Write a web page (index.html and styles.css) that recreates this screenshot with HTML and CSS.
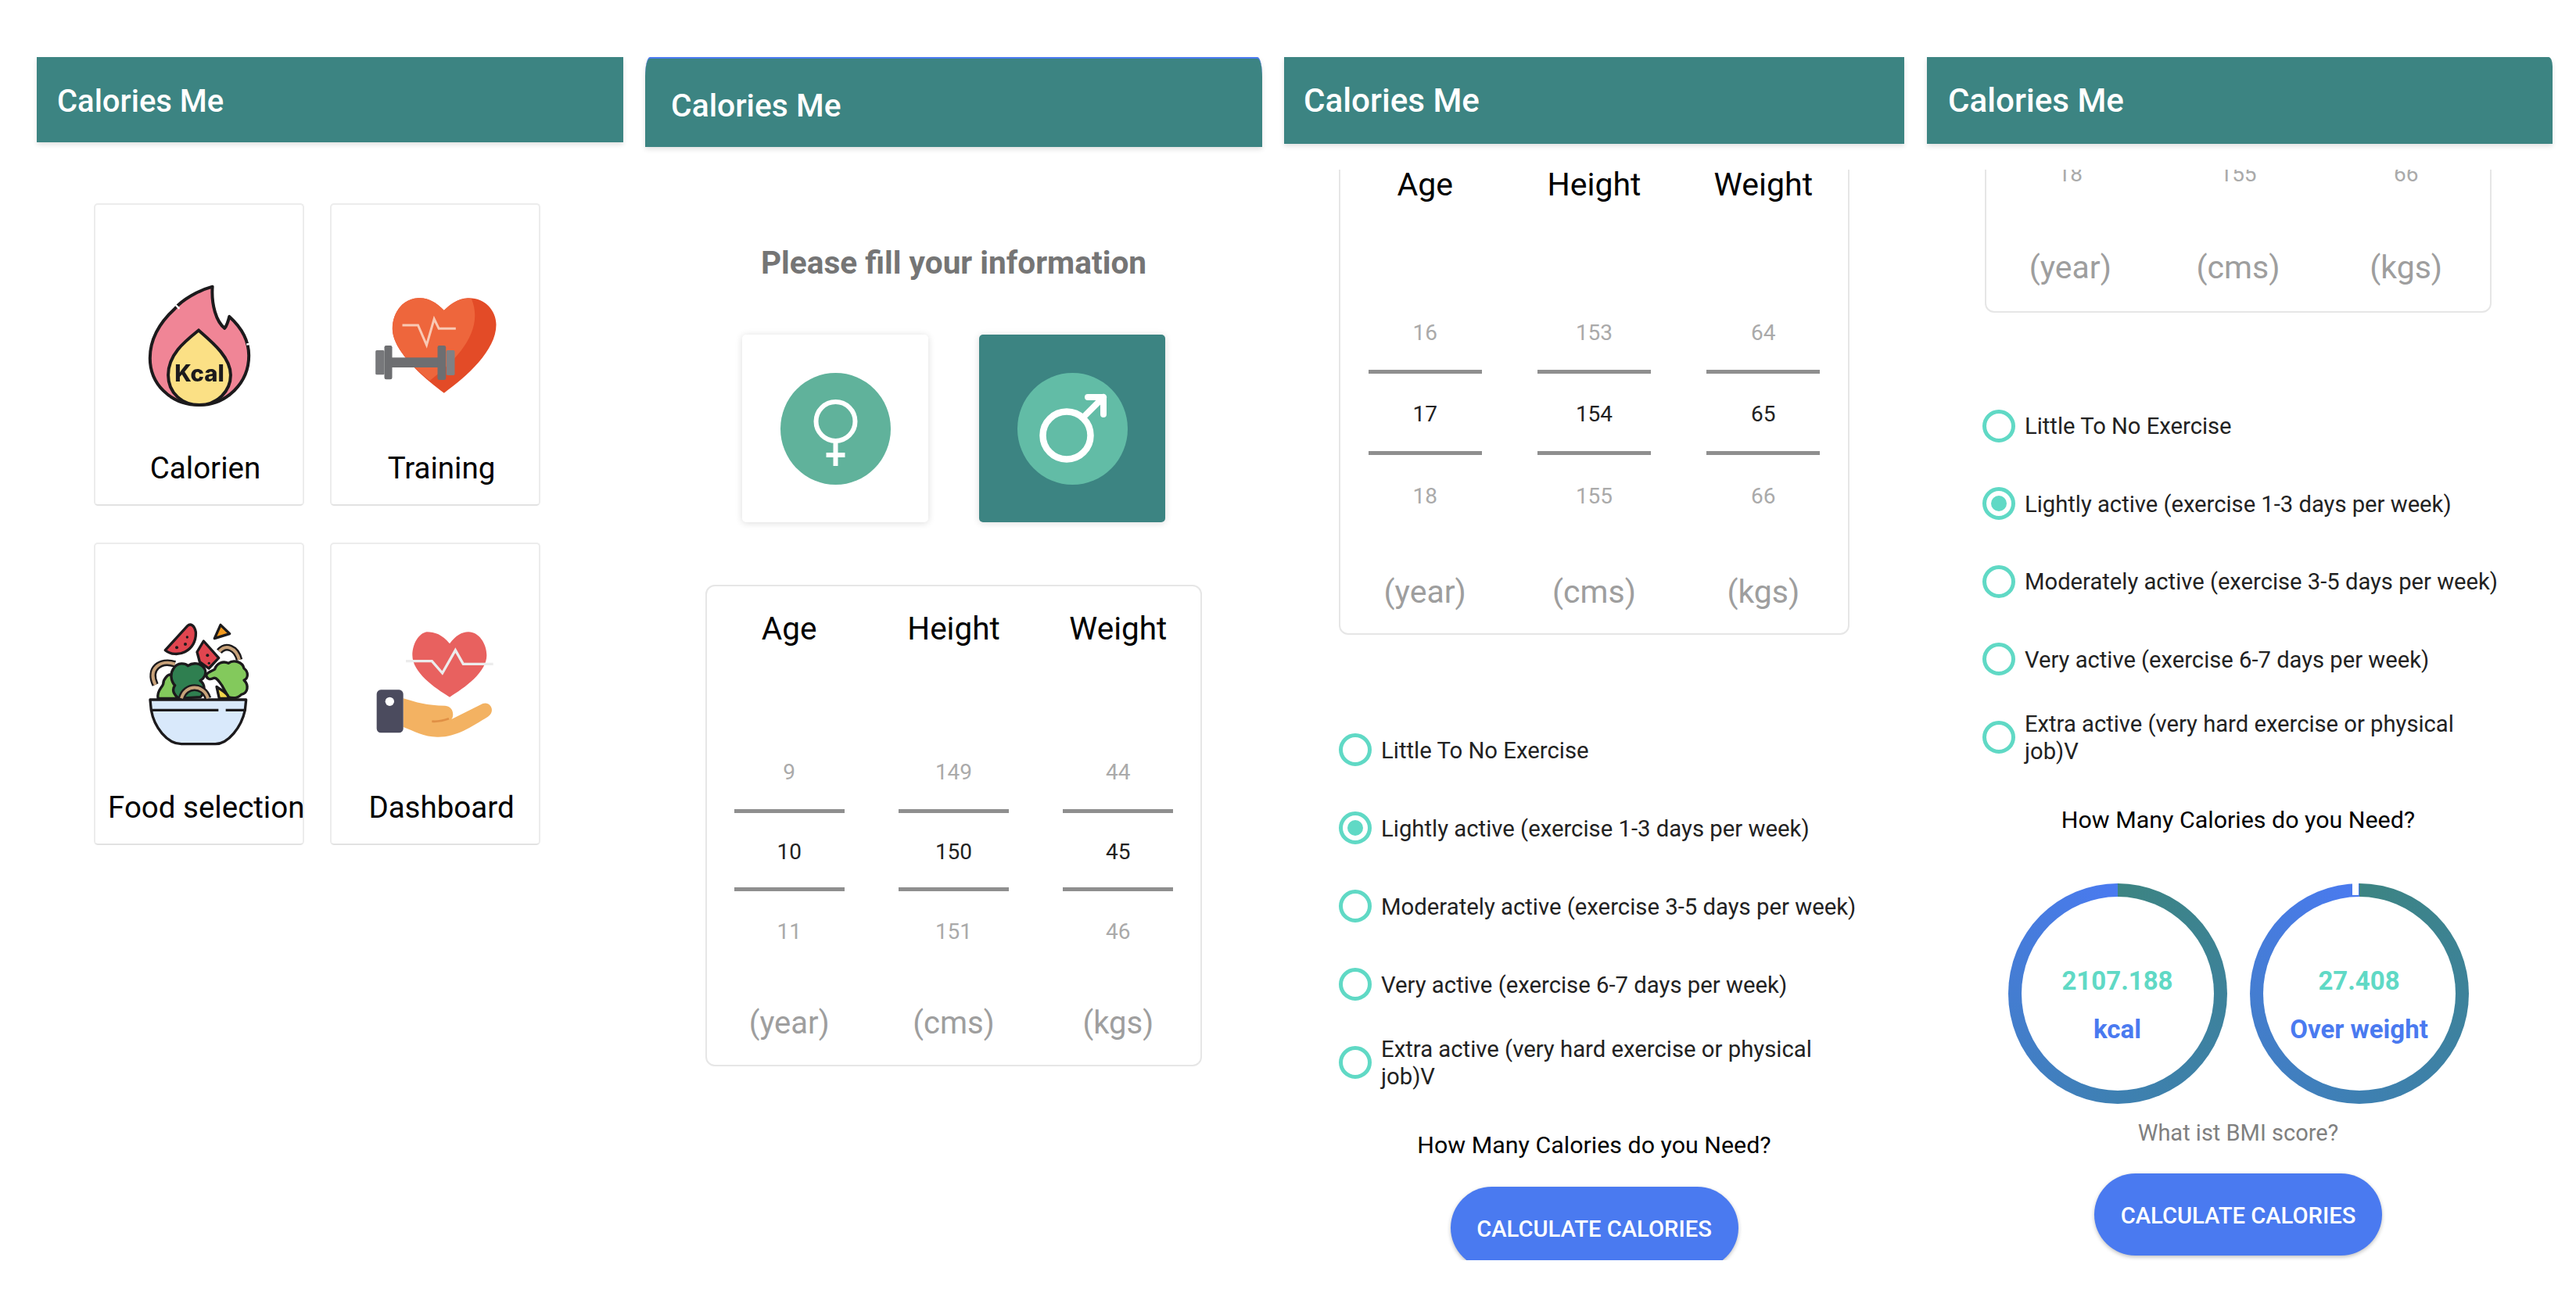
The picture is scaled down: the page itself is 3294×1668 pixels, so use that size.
FILE: index.html
```html
<!DOCTYPE html>
<html lang="en">

<head>
    <meta charset="UTF-8">
    <title>Calories Me</title>
    <link rel="stylesheet" href="styles.css">
</head>

<body>
    <div class="board">

        <!-- home menu -->
        <section class="phone phone-home">
            <div class="topbar">Calories Me</div>
            <div class="menu">
                <div class="tile">
                    <div class="tile-icon">
                        <svg class="icon-flame" viewBox="45 60 420 490">
                            <path d="M305 80C250 95 190 130 160 165C100 220 65 280 65 355C65 450 140 535 255 535C360 535 445 450 445 345C445 290 420 240 370 195C365 215 360 230 352 240C320 215 300 150 305 80Z" fill="#f08596" stroke="#1c1a1c" stroke-width="12" stroke-linejoin="round"/>
                            <path d="M252 248C200 290 135 340 135 420C135 490 190 535 255 535C325 535 375 480 375 420C375 350 300 290 252 248Z" fill="#fbe085" stroke="#1c1a1c" stroke-width="12"/>
                            <path d="M164 151L178 165M436 302L452 300" stroke="#fff" stroke-width="7" fill="none"/>
                            <text class="kcal-text" x="255" y="445" text-anchor="middle">Kcal</text>
                        </svg>
                    </div>
                    <div class="tile-name">Calorien</div>
                </div>
                <div class="tile">
                    <div class="tile-icon">
                        <svg class="icon-training" viewBox="920 115 485 387">
                            <path d="M1195 175C1160 140 1130 125 1095 128C1040 130 997 180 997 245C997 330 1110 430 1195 492C1280 430 1395 330 1395 230C1395 175 1350 125 1285 128C1250 130 1220 150 1195 175Z" fill="#e34b27"/>
                            <path d="M1195 175C1160 140 1130 125 1095 128C1040 130 997 180 997 245C997 310 1065 385 1140 445C1250 360 1350 250 1300 130C1255 125 1220 150 1195 175Z" fill="#ee663c"/>
                            <polyline points="1035,232 1095,232 1128,308 1157,208 1175,245 1240,245" fill="none" stroke="#f9c9b4" stroke-width="9"/>
                            <rect x="990" y="356" width="185" height="38" fill="#6d6e71"/>
                            <rect x="932" y="328" width="34" height="94" rx="5" fill="#77787b"/>
                            <rect x="966" y="310" width="30" height="130" rx="7" fill="#6d6e71"/>
                            <rect x="1170" y="310" width="32" height="132" rx="7" fill="#6d6e71"/>
                            <rect x="1204" y="328" width="32" height="96" rx="5" fill="#808184"/>
                        </svg>
                    </div>
                    <div class="tile-name">Training</div>
                </div>
                <div class="tile">
                    <div class="tile-icon">
                        <svg class="icon-salad" viewBox="55 45 405 480">
                            <g stroke="#1c1a1c" stroke-width="10" stroke-linejoin="round">
                                <path d="M128 155C170 190 250 160 245 85C240 60 225 50 213 62Z" fill="#e0454f"/>
                                <path d="M340 58L317 110L375 92Z" fill="#f39a1f"/>
                                <path d="M335 160C360 130 400 145 412 192" fill="none" stroke-width="26"/>
                                <path d="M90 288C60 225 110 190 165 208" fill="none" stroke-width="26"/>
                                <path d="M100 340C95 310 115 300 120 285C120 265 140 245 150 250C165 270 160 290 172 310L172 340Z" fill="#83c95c"/>
                                <path d="M160 225C175 200 205 205 215 215C235 200 265 205 278 225C290 245 275 265 262 272C285 290 280 320 262 335L180 340C165 330 150 310 165 290C150 275 145 245 160 225Z" fill="#2f7f50"/>
                                <path d="M285 250C295 235 310 235 318 228C325 205 350 195 370 205C390 190 425 200 430 225C450 240 445 265 430 270C450 290 445 320 420 325C405 340 385 340 370 335L345 290C335 275 325 260 315 262C300 270 285 265 285 250Z" fill="#83c95c"/>
                                <path d="M275 120L250 162L260 200L295 225L333 185Z" fill="#e0454f"/>
                                <path d="M325 295C345 310 370 320 372 340H335Z" fill="#f2d64b"/>
                                <path d="M190 340C205 285 275 285 292 340" fill="none" stroke-width="26"/>
                                <path d="M70 345H438L434 385C420 450 370 515 320 515H190C135 515 85 450 74 385Z" fill="#d9e9fb"/>
                            </g>
                            <path d="M335 160C360 130 400 145 412 192M90 288C60 225 110 190 165 208M190 340C205 285 275 285 292 340" fill="none" stroke="#c8a27a" stroke-width="12"/>
                            <path d="M78 385H332M360 385H430" stroke="#1c1a1c" stroke-width="10" fill="none"/>
                            <circle cx="172" cy="145" r="6" fill="#1c1a1c"/>
                            <circle cx="205" cy="132" r="6" fill="#1c1a1c"/>
                            <circle cx="212" cy="105" r="5" fill="#1c1a1c"/>
                            <circle cx="290" cy="175" r="6" fill="#1c1a1c"/>
                            <circle cx="296" cy="205" r="5" fill="#1c1a1c"/>
                        </svg>
                    </div>
                    <div class="tile-name">Food selection</div>
                </div>
                <div class="tile">
                    <div class="tile-icon">
                        <svg class="icon-care" viewBox="930 75 465 420">
                            <path d="M1218 130C1190 95 1160 85 1130 85C1100 90 1075 130 1075 175C1075 240 1160 300 1218 335C1275 300 1360 240 1360 175C1360 130 1330 85 1290 85C1265 85 1240 100 1218 130Z" fill="#e8615f"/>
                            <polyline points="1050,197 1150,197 1190,243 1240,155 1270,208 1385,208" fill="none" stroke="#ececec" stroke-width="10"/>
                            <path d="M1040 340C1090 355 1130 368 1200 368C1235 370 1235 410 1225 420L1345 360C1375 350 1395 390 1365 410C1300 450 1240 490 1170 488C1120 488 1080 465 1040 450Z" fill="#f3b262"/>
                            <path d="M1150 428C1170 430 1195 425 1215 418" fill="none" stroke="#e09045" stroke-width="8"/>
                            <rect x="938" y="307" width="102" height="165" rx="16" fill="#4b4b5e"/>
                            <circle cx="988" cy="352" r="17" fill="#fff"/>
                        </svg>
                    </div>
                    <div class="tile-name">Dashboard</div>
                </div>
            </div>
        </section>

        <!-- information form -->
        <section class="phone phone-form">
            <div class="topbar">Calories Me</div>
            <h2 class="form-title">Please fill your information</h2>
            <div class="gender-row">
                <div class="gender-card">
                    <svg class="gender-badge badge-female" viewBox="0 0 141 143">
                        <circle cx="70.5" cy="62" r="25" fill="none" stroke="#fff" stroke-width="6"/>
                        <path d="M70.5 87V119M58.5 105H82.5" fill="none" stroke="#fff" stroke-width="6"/>
                    </svg>
                </div>
                <div class="gender-card gender-active">
                    <svg class="gender-badge badge-male" viewBox="0 0 141 143">
                        <circle cx="63" cy="80" r="30.5" fill="none" stroke="#fff" stroke-width="8.5"/>
                        <path d="M84 57L110 31M90 31H110V53" fill="none" stroke="#fff" stroke-width="8" stroke-linecap="round" stroke-linejoin="round"/>
                    </svg>
                </div>
            </div>
            <div class="stats stats-form">
                <div class="stat-col">
                    <div class="stat-label">Age</div>
                    <div class="wheel-prev">9</div>
                    <div class="wheel-now">10</div>
                    <div class="wheel-next">11</div>
                    <div class="stat-unit">(year)</div>
                </div>
                <div class="stat-col">
                    <div class="stat-label">Height</div>
                    <div class="wheel-prev">149</div>
                    <div class="wheel-now">150</div>
                    <div class="wheel-next">151</div>
                    <div class="stat-unit">(cms)</div>
                </div>
                <div class="stat-col">
                    <div class="stat-label">Weight</div>
                    <div class="wheel-prev">44</div>
                    <div class="wheel-now">45</div>
                    <div class="wheel-next">46</div>
                    <div class="stat-unit">(kgs)</div>
                </div>
            </div>
        </section>

        <!-- scrolled a bit -->
        <section class="phone phone-activity">
            <div class="topbar">Calories Me</div>
            <div class="scroll">
                <div class="stats stats-activity">
                    <div class="stat-col">
                        <div class="stat-label">Age</div>
                        <div class="wheel-prev">16</div>
                        <div class="wheel-now">17</div>
                        <div class="wheel-next">18</div>
                        <div class="stat-unit">(year)</div>
                    </div>
                    <div class="stat-col">
                        <div class="stat-label">Height</div>
                        <div class="wheel-prev">153</div>
                        <div class="wheel-now">154</div>
                        <div class="wheel-next">155</div>
                        <div class="stat-unit">(cms)</div>
                    </div>
                    <div class="stat-col">
                        <div class="stat-label">Weight</div>
                        <div class="wheel-prev">64</div>
                        <div class="wheel-now">65</div>
                        <div class="wheel-next">66</div>
                        <div class="stat-unit">(kgs)</div>
                    </div>
                </div>
                <div class="options">
                    <div class="option"><span class="radio"></span><span class="option-text">Little To No Exercise</span></div>
                    <div class="option"><span class="radio radio-on"></span><span class="option-text">Lightly active (exercise 1-3 days per week)</span></div>
                    <div class="option"><span class="radio"></span><span class="option-text">Moderately active (exercise 3-5 days per week)</span></div>
                    <div class="option"><span class="radio"></span><span class="option-text">Very active (exercise 6-7 days per week)</span></div>
                    <div class="option"><span class="radio"></span><span class="option-text">Extra active (very hard exercise or physical job)V</span></div>
                </div>
                <p class="question">How Many Calories do you Need?</p>
                <button class="calc-btn">CALCULATE CALORIES</button>
            </div>
        </section>

        <!-- result, scrolled further -->
        <section class="phone phone-result">
            <div class="topbar">Calories Me</div>
            <div class="scroll">
                <div class="stats stats-result">
                    <div class="stat-col">
                        <div class="wheel-next">18</div>
                        <div class="stat-unit">(year)</div>
                    </div>
                    <div class="stat-col">
                        <div class="wheel-next">155</div>
                        <div class="stat-unit">(cms)</div>
                    </div>
                    <div class="stat-col">
                        <div class="wheel-next">66</div>
                        <div class="stat-unit">(kgs)</div>
                    </div>
                </div>
                <div class="options">
                    <div class="option"><span class="radio"></span><span class="option-text">Little To No Exercise</span></div>
                    <div class="option"><span class="radio radio-on"></span><span class="option-text">Lightly active (exercise 1-3 days per week)</span></div>
                    <div class="option"><span class="radio"></span><span class="option-text">Moderately active (exercise 3-5 days per week)</span></div>
                    <div class="option"><span class="radio"></span><span class="option-text">Very active (exercise 6-7 days per week)</span></div>
                    <div class="option"><span class="radio"></span><span class="option-text">Extra active (very hard exercise or physical job)V</span></div>
                </div>
                <p class="question">How Many Calories do you Need?</p>
                <div class="rings">
                    <div class="ring">
                        <div class="ring-inner">
                            <div class="ring-value">2107.188</div>
                            <div class="ring-label">kcal</div>
                        </div>
                    </div>
                    <div class="ring">
                        <span class="ring-notch"></span>
                        <div class="ring-inner">
                            <div class="ring-value">27.408</div>
                            <div class="ring-label">Over weight</div>
                        </div>
                    </div>
                </div>
                <p class="bmi-note">What ist BMI score?</p>
                <button class="calc-btn">CALCULATE CALORIES</button>
            </div>
        </section>

    </div>
</body>

</html>
```

FILE: styles.css
```css
* {
    box-sizing: border-box;
}

body {
    margin: 0;
    background: #fff;
    font-family: Roboto, "Liberation Sans", sans-serif;
    color: #000;
}

.board {
    display: flex;
    align-items: flex-start;
    width: 3294px;
    height: 1668px;
    padding-top: 73px;
    overflow: hidden;
}

.phone {
    flex: none;
}

.phone-home {
    width: 750px;
    margin-left: 47px;
}

.phone-form {
    width: 789px;
    margin-left: 28px;
}

.phone-activity {
    width: 793px;
    margin-left: 28px;
}

.phone-result {
    width: 800px;
    margin-left: 29px;
}

/* header bar */
.topbar {
    display: flex;
    align-items: center;
    height: 111px;
    padding-left: 25px;
    background: #3c8482;
    color: #fff;
    font-size: 42.2px;
    font-weight: 500;
    box-shadow: 0 3px 6px rgba(0, 0, 0, 0.12);
}

.phone-home .topbar {
    height: 109px;
    padding-top: 4px;
    padding-left: 26px;
    font-size: 40px;
}

.phone-form .topbar {
    height: 115px;
    padding-top: 6px;
    padding-left: 33px;
    border-top: 2px solid #4a7af0;
    border-radius: 6px 6px 0 0 / 25px 25px 0 0;
    font-size: 40.8px;
}

.phone-result .topbar {
    padding-left: 27px;
    border-radius: 0 5px 0 0 / 0 12px 0 0;
}

/* home tiles */
.menu {
    display: grid;
    grid-template-columns: 269px 269px;
    column-gap: 33px;
    row-gap: 47px;
    margin: 78px 0 0 73px;
}

.tile {
    height: 387px;
    border: 2px solid #ececec;
    border-bottom-color: #e2e2e2;
    border-radius: 5px;
    background: #fff;
}

.tile-icon {
    display: flex;
    align-items: center;
    justify-content: center;
    height: 313px;
    padding-top: 45px;
}

.tile-icon svg {
    display: block;
    filter: blur(0.5px);
}

.icon-flame {
    width: 140px;
    height: 163px;
}

.icon-training {
    width: 162px;
    height: 129px;
}

.icon-salad {
    width: 135px;
    height: 160px;
}

.icon-care {
    width: 155px;
    height: 140px;
}

.kcal-text {
    font-family: Inter, sans-serif;
    font-size: 88px;
    font-weight: 800;
    fill: #1c1a1c;
}

.tile-name {
    padding-left: 16px;
    font-size: 38.5px;
    line-height: 48px;
    text-align: center;
    white-space: nowrap;
}

/* form screen */
.form-title {
    margin: 124px 0 0;
    font-size: 40.6px;
    font-weight: 700;
    line-height: 48px;
    color: #757575;
    text-align: center;
}

.gender-row {
    display: flex;
    justify-content: center;
    gap: 65px;
    margin-top: 68px;
}

.gender-card {
    display: flex;
    align-items: center;
    justify-content: center;
    width: 238px;
    height: 240px;
    border-radius: 5px;
    background: #fff;
    box-shadow: 0 1px 10px rgba(0, 0, 0, 0.14);
}

.gender-active {
    background: #3c8482;
}

.gender-badge {
    display: block;
    width: 141px;
    height: 143px;
    border-radius: 50%;
}

.badge-female {
    background: #60b29b;
}

.badge-male {
    background: #62bca6;
}

/* age / height / weight card */
.stats {
    display: flex;
    margin: 80px auto 0;
    border: 2px solid #e6e6e6;
    border-radius: 12px;
    background: #fff;
}

.stats-form {
    width: 635px;
    height: 616px;
    --wheel-w: 141px;
    --label-top: 30px;
    --prev-gap: 111px;
    --prev-h: 96px;
    --now-h: 105px;
    --next-h: 103px;
    --unit-gap: 42px;
}

.stats-activity {
    width: 653px;
    height: 634px;
    margin-top: -39px;
    --wheel-w: 145px;
    --label-top: 32px;
    --prev-gap: 118px;
    --prev-h: 95px;
    --now-h: 109px;
    --next-h: 104px;
    --unit-gap: 47px;
}

.stats-result {
    width: 648px;
    height: 235px;
    margin-top: -52px;
    margin-bottom: 0;
    --label-top: 4px;
    --wheel-w: 143px;
    --next-h: 102px;
    --unit-gap: 45px;
}

.stat-col {
    display: flex;
    flex: 1;
    flex-direction: column;
    align-items: center;
    padding-top: var(--label-top);
}

.stat-label {
    font-size: 41px;
    line-height: 48px;
}

.stats-form .stat-label {
    font-size: 40.5px;
}

.wheel-prev,
.wheel-now,
.wheel-next {
    display: flex;
    align-items: center;
    justify-content: center;
    width: var(--wheel-w);
    font-size: 28px;
    color: #aaa;
}

.wheel-prev {
    height: var(--prev-h);
    margin-top: var(--prev-gap);
}

.wheel-now {
    height: var(--now-h);
    padding-top: 3px;
    border-top: 5px solid #8f8f8f;
    border-bottom: 5px solid #8f8f8f;
    color: #222;
}

.wheel-next {
    height: var(--next-h);
}

.stat-unit {
    margin-top: var(--unit-gap);
    font-size: 41px;
    line-height: 48px;
    color: #9e9e9e;
}

.stats-form .stat-unit {
    font-size: 40px;
}

/* clipped scrolling part */
.scroll {
    margin-top: 33px;
    overflow: hidden;
}

.phone-activity .scroll {
    height: 1395px;
}

.phone-result .scroll {
    height: 1410px;
    padding-right: 4px;
}

.options {
    display: flex;
    flex-direction: column;
    margin: 97px 0 0 70px;
}

.option {
    display: flex;
    align-items: center;
    gap: 12px;
    height: 100px;
}

.phone-result .options {
    margin-top: 95px;
    margin-left: 71px;
}

.phone-result .option {
    height: 99.5px;
}

.radio {
    flex: none;
    width: 42px;
    height: 42px;
    border: 5px solid #60d9c5;
    border-radius: 50%;
}

.radio-on {
    padding: 6px;
    background: #60d9c5 content-box;
}

.option-text {
    width: 616px;
    padding-top: 2px;
    font-size: 29.3px;
    line-height: 35px;
    color: #222;
}

.phone-result .option-text {
    font-size: 29.2px;
}

.question {
    margin: 36px 0 0;
    font-size: 30.4px;
    line-height: 40px;
    text-align: center;
}

.calc-btn {
    display: block;
    width: 368px;
    height: 105px;
    margin: 33px auto 0;
    padding: 3px 0 0;
    border: none;
    border-radius: 53px;
    background: #4a7af0;
    color: #fff;
    font-family: inherit;
    font-size: 29.2px;
    font-weight: 500;
    box-shadow: 0 2px 5px rgba(0, 0, 0, 0.25);
}

/* result rings */
.rings {
    display: flex;
    justify-content: center;
    gap: 29px;
    margin-top: 61px;
}

.ring {
    position: relative;
    width: 280px;
    height: 282px;
    padding: 17px;
    border-radius: 50%;
    background: conic-gradient(#3c8482, #3e80b2 50%, #4a7af0);
}

.ring-inner {
    display: flex;
    flex-direction: column;
    align-items: center;
    height: 100%;
    padding-top: 88px;
    border-radius: 50%;
    background: #fff;
}

.ring-notch {
    position: absolute;
    top: 0;
    left: 131px;
    width: 8px;
    height: 15px;
    background: #fff;
}

.ring-value {
    font-size: 33px;
    font-weight: 700;
    line-height: 40px;
    color: #60d9c5;
}

.ring-label {
    margin-top: 20px;
    font-size: 33px;
    font-weight: 700;
    line-height: 44px;
    color: #4a7af0;
    white-space: nowrap;
}

.bmi-note {
    margin: 17px 0 0;
    font-size: 29px;
    line-height: 40px;
    color: #808080;
    text-align: center;
}

.phone-result .calc-btn {
    margin-top: 32px;
}
```
